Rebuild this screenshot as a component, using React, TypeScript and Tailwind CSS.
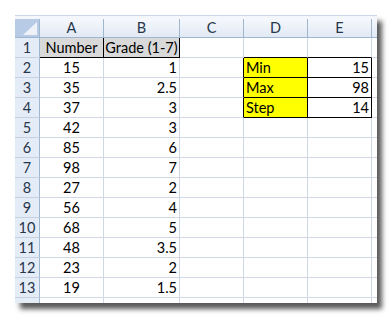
const cols = ['A', 'B', 'C', 'D', 'E']
const colWidths = ['w-[64px]', 'w-[76px]', 'w-[64px]', 'w-[64px]', 'w-[64px]']

type Cell = { v: string; align: 'left' | 'center' | 'right'; fill?: 'gray' | 'yellow' }

const data: Record<string, Cell> = {
  A1: { v: 'Number', align: 'center', fill: 'gray' },
  B1: { v: 'Grade (1-7)', align: 'center', fill: 'gray' },
  D2: { v: 'Min', align: 'left', fill: 'yellow' },
  E2: { v: '15', align: 'right' },
  D3: { v: 'Max', align: 'left', fill: 'yellow' },
  E3: { v: '98', align: 'right' },
  D4: { v: 'Step', align: 'left', fill: 'yellow' },
  E4: { v: '14', align: 'right' },
}

const numbers = [15, 35, 37, 42, 85, 98, 27, 56, 68, 48, 23, 19]
const grades = ['1', '2.5', '3', '3', '6', '7', '2', '4', '5', '3.5', '2', '1.5']
numbers.forEach((n, i) => {
  data[`A${i + 2}`] = { v: String(n), align: 'center' }
  data[`B${i + 2}`] = { v: grades[i], align: 'right' }
})

// black borders: A1:B1 and D2:E4
const boxed = (col: number, row: number) =>
  (row === 1 && col <= 1) || (row >= 2 && row <= 4 && col >= 3)

function cellClasses(col: number, row: number) {
  const right = boxed(col, row) || boxed(col + 1, row) ? 'border-r-black' : 'border-r-[#d0d7e5]'
  const bottom = boxed(col, row) || boxed(col, row + 1) ? 'border-b-black' : 'border-b-[#d0d7e5]'
  return `${right} ${bottom}`
}

function DataCell({ col, row }: { col: number; row: number }) {
  const cell = data[`${cols[col]}${row}`]
  const fill =
    cell?.fill === 'gray' ? 'bg-[#d9d9d9]' : cell?.fill === 'yellow' ? 'bg-[#ffff00]' : 'bg-white'
  const align =
    cell?.align === 'right' ? 'justify-end' : cell?.align === 'center' ? 'justify-center' : 'justify-start'
  return (
    <div
      className={`${colWidths[col]} h-full shrink-0 border-r border-b flex items-center px-[2px] pt-[2px] whitespace-nowrap ${align} ${fill} ${cellClasses(col, row)}`}
    >
      {cell?.v}
    </div>
  )
}

function Row({ row }: { row: number }) {
  return (
    <div className="flex h-[20px] shrink-0">
      <div className="w-[25px] h-full shrink-0 flex items-center justify-center pt-[2px] bg-[#e4ecf7] border-r border-r-[#9eb6ce] border-b border-b-[#c5d1e0] text-[#27364a]">
        {row}
      </div>
      {cols.map((_, c) => (
        <DataCell key={c} col={c} row={row} />
      ))}
      <div className="w-[5px] h-full shrink-0 border-b border-b-[#d0d7e5] bg-white" />
    </div>
  )
}

export default function App() {
  const rows = Array.from({ length: 13 }, (_, i) => i + 1)

  return (
    <div className="min-h-screen bg-white pl-[15px] pt-[15px]">
      <div
        className="w-[362px] h-[288px] overflow-hidden flex flex-col bg-white text-[14.5px] leading-none text-black shadow-[5px_6px_5px_rgba(0,0,0,0.65)]"
        style={{ fontFamily: 'Lato, "Liberation Sans", sans-serif' }}
      >
        {/* strip above the headers */}
        <div className="h-[4px] shrink-0 bg-[#f3f6fa] border-t border-t-[#c9d7e8]" />

        {/* column headers */}
        <div className="flex h-[19px] shrink-0">
          <div className="relative w-[25px] h-full shrink-0 bg-[#b7cbe6] border-r border-r-[#9eb6ce] border-b border-b-[#9eb6ce]">
            <svg className="absolute right-[2px] bottom-[2px]" width="14" height="13" viewBox="0 0 14 13">
              <polygon points="14,0 14,13 0,13" fill="#eef2f8" />
            </svg>
          </div>
          {cols.map((c, i) => (
            <div
              key={c}
              className={`${colWidths[i]} h-full shrink-0 flex items-center justify-center pt-[1px] bg-gradient-to-b from-[#f5f8fc] to-[#e1e9f4] border-r border-r-[#9eb6ce] border-b border-b-[#9eb6ce] text-[#27364a]`}
            >
              {c}
            </div>
          ))}
          <div className="w-[5px] h-full shrink-0 bg-gradient-to-b from-[#f5f8fc] to-[#e1e9f4] border-b border-b-[#9eb6ce]" />
        </div>

        {rows.map((r) => (
          <Row key={r} row={r} />
        ))}

        {/* partially visible row 14 */}
        <div className="flex h-[5px] shrink-0">
          <div className="w-[25px] h-full shrink-0 bg-[#e4ecf7] border-r border-r-[#9eb6ce]" />
          {cols.map((c, i) => (
            <div key={c} className={`${colWidths[i]} h-full shrink-0 border-r border-r-[#d0d7e5]`} />
          ))}
        </div>
      </div>
    </div>
  )
}
